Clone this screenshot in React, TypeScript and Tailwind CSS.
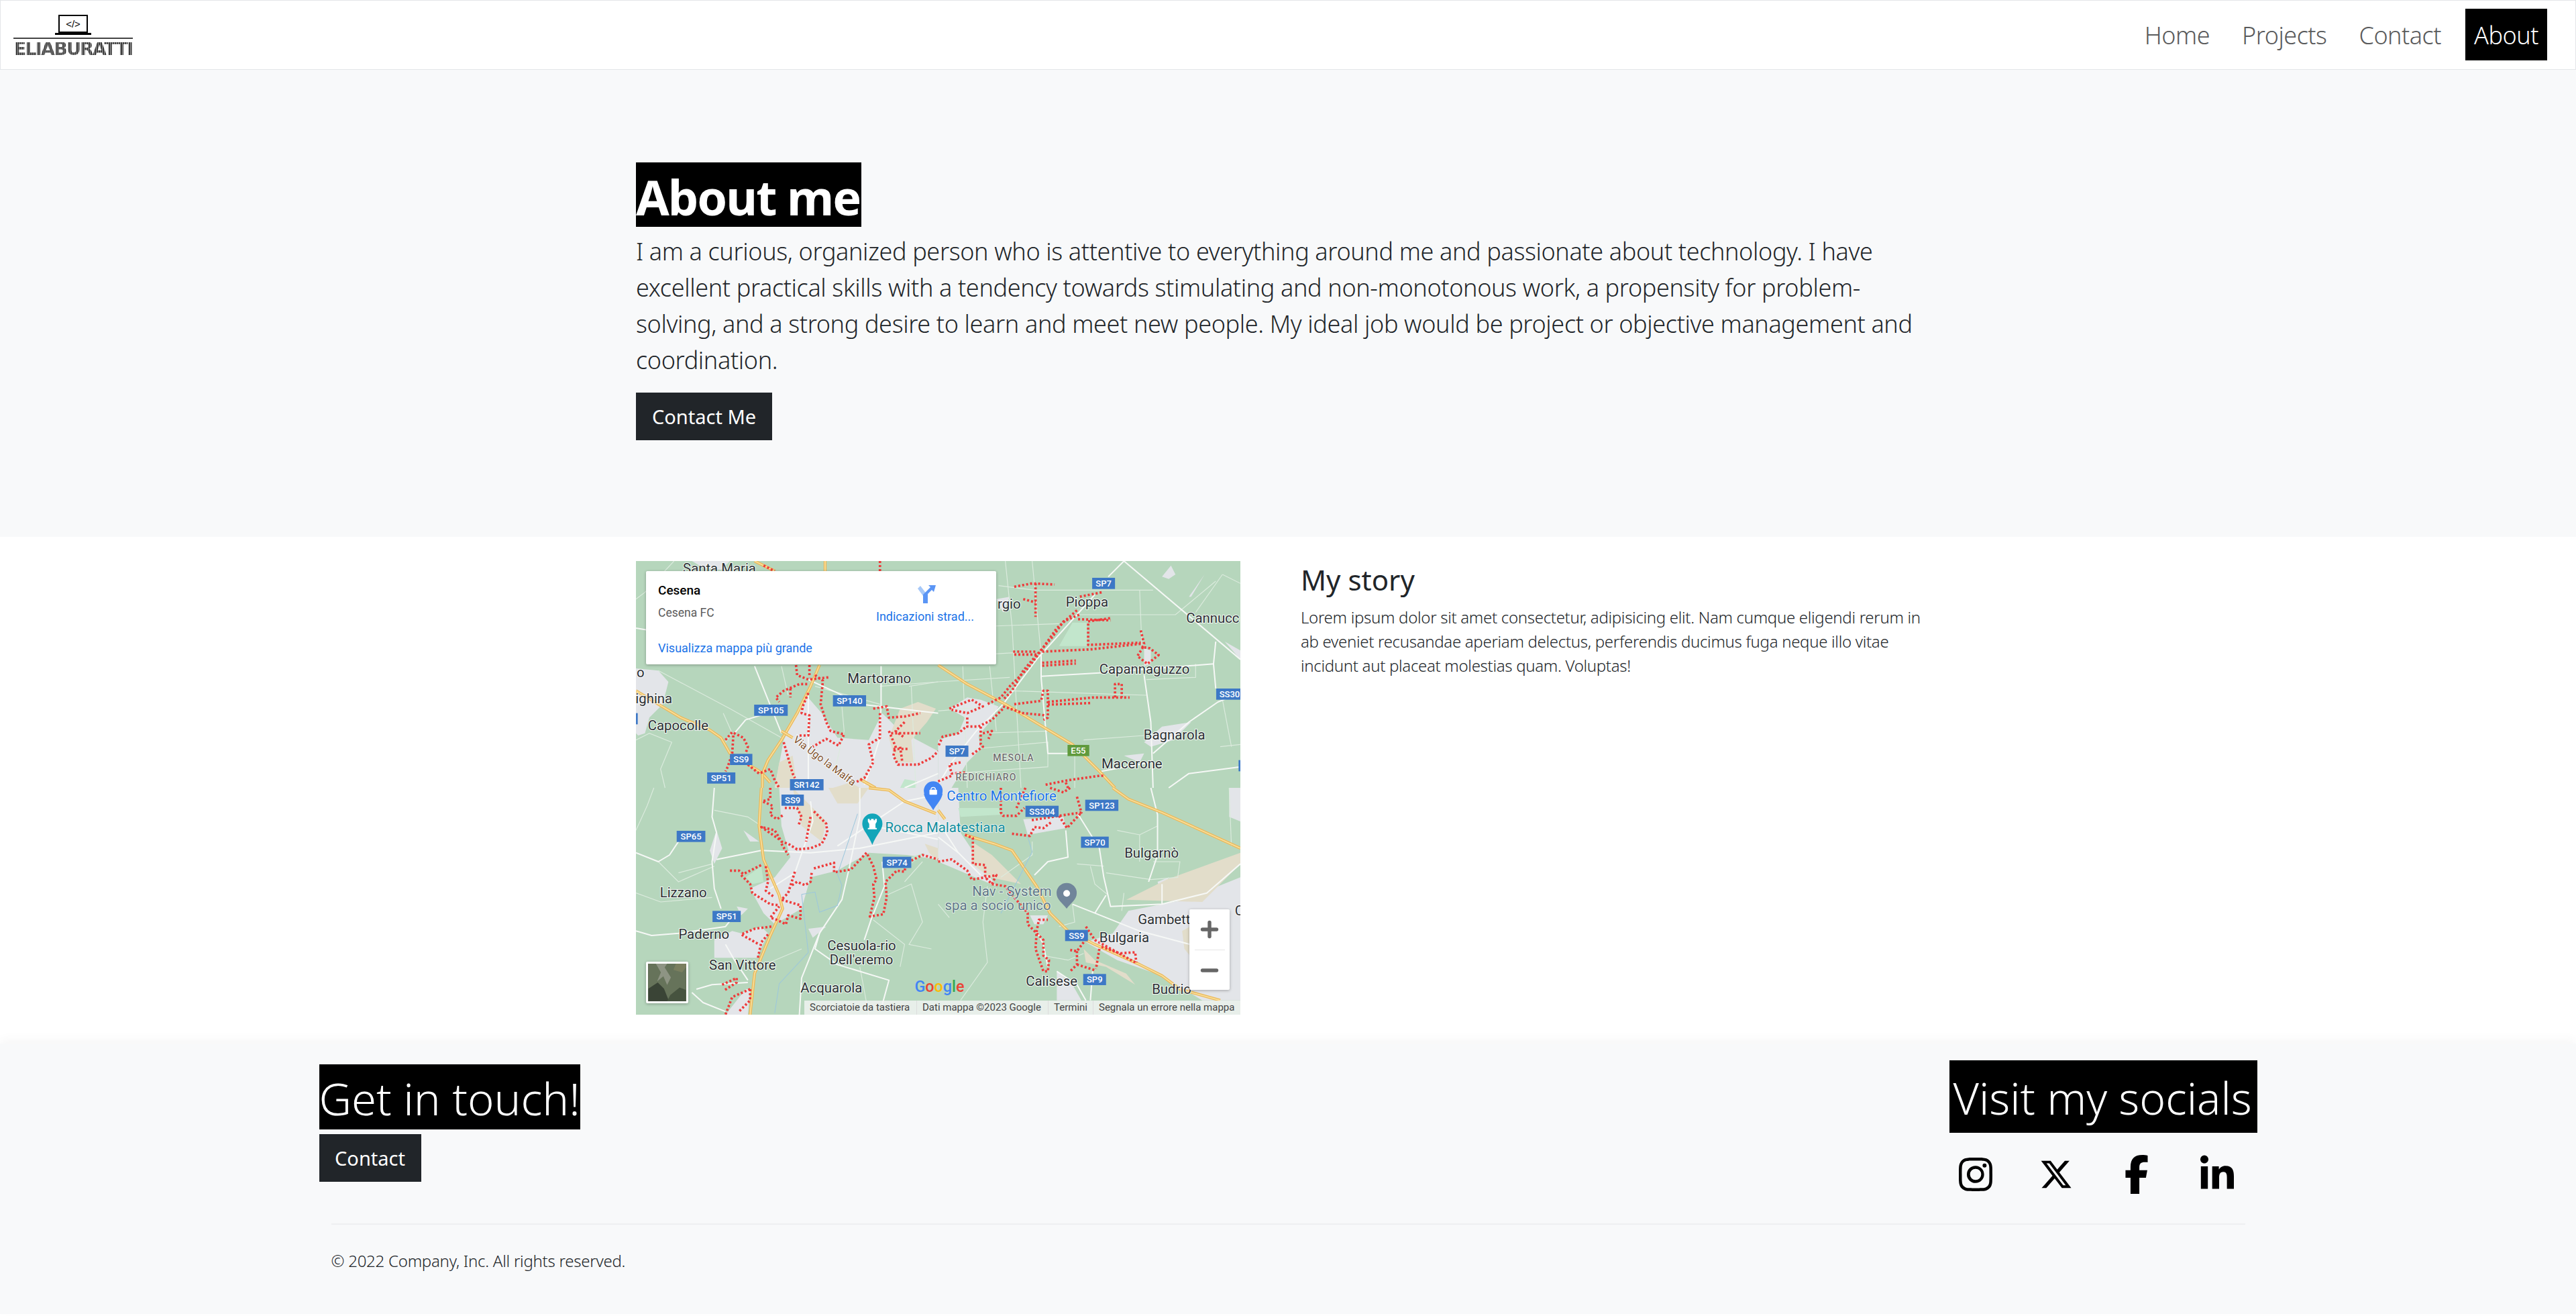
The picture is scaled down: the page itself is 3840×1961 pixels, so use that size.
import { Minus, Plus } from "lucide-react";
import { BsInstagram } from "react-icons/bs";
import { FaFacebookF, FaLinkedinIn, FaXTwitter } from "react-icons/fa6";

// map coords are 3x the real pixels, one group per quadrant of the map
type Layer = {
  dx: number;
  dy: number;
  urban: string[];
  beige: string[];
  park: string[];
  white: string[];
  thin: string[];
  yellow: string[];
  red: string[];
};

const layers: Layer[] = [
  {
    dx: 0,
    dy: 0,
    urban: [
      "0,480 100,490 145,540 120,640 60,700 40,770 10,780 0,770",
      "760,600 830,680 900,790 1040,800 1100,680 1180,760 1350,850 1350,1014 620,1014 660,800 720,680",
      "250,0 420,0 380,40 300,30",
    ],
    beige: [
      "1180,660 1260,630 1340,660 1300,720 1230,800 1240,900 1160,900 1130,790",
      "640,900 700,870 720,1014 620,1014",
      "880,1014 960,990 1000,1014",
    ],
    park: ["1180,1014 1200,975 1255,985 1250,1014"],
    white: [
      "530,470 590,620 650,770",
      "440,770 490,710 590,680",
      "770,530 900,590 1000,640 1350,680",
      "1095,470 1095,640",
      "770,600 770,1014",
      "1095,640 1090,790 1050,920 1020,1000",
      "1350,950 1200,1014",
      "0,300 60,310",
    ],
    thin: [
      "0,170 40,140 170,0",
      "390,680 430,770 400,810",
      "100,490 420,660 650,790",
      "0,800 60,770 160,810 110,930 130,1014",
      "650,470 680,600",
      "1220,560 1350,540",
      "920,650 930,760 890,930",
      "1090,560 1350,540",
      "1230,560 1250,1014",
      "800,560 1090,640",
    ],
    yellow: [
      "0,580 200,700 330,755 380,790 420,860 560,945 600,990",
      "820,465 780,560 720,680 650,800 590,890 565,950 565,1014",
      "530,0 620,45",
      "845,0 845,45",
      "650,760 700,790",
      "1000,975 1070,1014",
    ],
    red: [
      "715,465 720,510 770,530 860,520",
      "775,465 775,520",
      "800,510 835,535 825,640 850,720 870,760 930,775 905,825 850,795 790,830",
      "765,550 730,550 660,580 625,610 640,630",
      "690,570 690,610",
      "770,590 745,650 740,680 775,690 770,780 730,780",
      "400,800 430,765 480,790 500,830 490,860",
      "435,780 430,860 410,920 400,940",
      "500,910 550,950 600,930 620,980 640,1014",
      "660,810 700,950 710,970",
      "1060,660 1120,650 1130,700 1200,695 1270,680",
      "1090,680 1090,790 1040,820 1060,900 1020,970 980,990",
      "1130,760 1160,830 1150,870 1170,910 1260,910 1320,880 1350,850",
      "1140,770 1270,770",
      "1200,720 1160,760 1200,790",
      "1150,840 1220,840",
      "1180,830 1190,900",
      "570,20 620,45",
      "1090,0 1090,45",
    ],
  },
  {
    dx: 1350,
    dy: 0,
    urban: [
      "50,660 130,610 190,620 270,650 230,720 180,780 190,840 130,900 60,1014 0,1014 0,800 90,770 120,700",
      "920,390 950,400 950,460 920,470",
      "1000,70 1040,20 1060,60 1030,80",
      "1120,160 1190,60 1130,160",
      "920,810 1000,740 1130,720 1050,800 950,830",
      "830,870 920,860 900,900",
      "1280,360 1350,400 1350,440",
      "260,170 320,160 290,230",
    ],
    beige: [],
    park: ["540,380 600,275 665,275 665,380"],
    white: [
      "0,1000 60,900 170,760 290,640 440,440 620,240 700,150",
      "460,420 460,520 490,860 620,860",
      "460,515 720,500 1230,460",
      "830,0 1350,440",
      "920,510 950,720 960,1014",
      "960,860 1120,720 1250,630 1350,590",
      "1240,360 1230,460 1240,570",
      "1030,1014 1120,950 1350,920",
      "730,940 950,900",
      "830,0 760,70",
    ],
    thin: [
      "300,0 330,290 370,1014",
      "420,0 460,420",
      "0,300 540,280",
      "270,110 430,130 960,130",
      "0,430 340,410",
      "620,240 1060,240 1240,90",
      "900,130 910,380",
      "0,670 230,650",
      "110,470 130,1014",
      "230,470 260,760",
      "0,540 320,520",
      "320,580 930,600",
      "180,770 490,760",
      "160,840 490,810 490,920 60,950",
      "650,800 920,780",
      "610,870 610,1014",
      "1270,60 1350,100",
      "1270,60 1150,230",
      "930,530 1150,520 1150,460",
      "1260,830 1350,820",
      "1270,620 1310,830",
    ],
    yellow: ["0,465 130,550 300,640 600,820 720,940 790,1014"],
    red: [
      "340,115 420,100 520,105",
      "435,100 435,250",
      "380,170 435,185",
      "730,140 680,150 630,160",
      "620,220 530,300 460,400 400,480 320,560 280,610 220,640",
      "630,240 560,270 510,340 440,420 380,490 330,580 290,620",
      "625,260 770,265",
      "670,270 770,255",
      "670,280 670,375 905,365",
      "335,405 440,405",
      "340,418 440,418",
      "465,405 680,395 905,370",
      "905,310 920,370 910,390",
      "915,385 890,425 935,460 985,420 945,390 915,385",
      "465,455 615,445",
      "465,468 615,458",
      "340,640 460,625 470,580 490,580 490,700 470,710",
      "490,630 690,610 780,610 855,610",
      "790,610 790,550 820,550 820,610",
      "490,642 680,635",
      "290,650 380,680 480,690",
      "50,660 100,640 150,620 200,650 130,680 60,665",
      "130,700 130,740 180,740 240,710 290,660",
      "190,740 190,820 200,830 150,865",
      "200,770 240,760 225,795",
      "120,745 90,770 20,785 0,830",
      "100,900 50,910 60,950 120,945",
      "0,985 60,960",
      "480,1000 580,980 720,960 740,960",
      "570,990 580,1014",
    ],
  },
  {
    dx: 0,
    dy: 1014,
    urban: [
      "640,0 1350,0 1350,320 1210,300 1040,290 900,370 780,400 740,540 620,610 570,560 510,450 620,400 690,310 650,170",
      "470,650 560,620 590,650 540,760 350,760 350,680 430,640",
      "330,280 360,190 385,270 350,340",
      "400,1014 490,900 510,900 500,1014",
      "450,530 500,540 470,570",
      "770,630 850,620 790,670",
      "480,190 550,240 510,240",
    ],
    beige: [
      "860,0 1040,0 990,70 900,70",
      "700,0 850,150 830,240 740,170",
      "1290,250 1350,270 1350,330 1310,290",
    ],
    park: ["490,400 560,350 570,420 520,430", "1230,310 1290,290 1230,340"],
    white: [
      "350,0 340,130 360,200 340,330 350,450 380,540",
      "360,320 560,280 780,290 1000,270 1350,200",
      "780,60 790,150 710,380 600,450",
      "1000,0 1000,130 950,370 920,500 820,650 740,850 730,1014",
      "1100,330 1110,440 1050,590 1020,680",
      "1060,170 1350,230",
      "0,290 100,330 150,300 190,240",
      "0,640 70,660 190,650 400,620 440,570",
      "400,700 440,770 500,860",
      "270,900 340,880 500,870",
      "250,915 300,960 400,1000",
      "820,650 800,720 900,790 1130,860 1100,970",
      "900,260 1200,60 1350,30",
    ],
    thin: [
      "0,190 50,80 80,0",
      "100,330 190,420 350,350",
      "350,100 500,130 560,170",
      "190,380 340,340",
      "1120,480 1230,430 1280,600 1220,700 1320,720",
      "1060,590 1200,700 1180,800",
      "0,470 110,510 340,490",
      "550,800 740,720",
      "1000,800 1040,1014",
      "1280,330 1200,420",
    ],
    yellow: [
      "560,0 550,170 570,320 640,480 655,540 600,660 530,830 510,1014",
      "1040,0 1130,10 1200,60 1340,115",
    ],
    red: [
      "600,0 600,50 565,60 610,80 600,120 630,140 660,120",
      "665,90 720,90 740,130 725,170",
      "780,130 760,240",
      "795,105 850,160 855,200 830,250 780,270 720,275 680,250 650,240 620,190 560,175 640,230",
      "650,250 680,300",
      "420,370 460,370 480,385 560,345",
      "470,390 510,430 520,470 600,520 640,525",
      "580,350 590,420 580,460 620,490",
      "710,375 680,470 650,500 735,525 735,585 680,570 670,610 630,590 600,580 640,530",
      "795,360 885,335 885,378 960,365 1030,290 1060,350 1075,410 1060,430 1065,490 1045,575 1105,565 1120,490 1115,420 1165,370 1200,375 1210,310",
      "1230,325 1280,300 1350,320",
      "785,380 780,420 755,435 720,420 690,440",
      "605,620 530,630 470,655 550,700",
      "590,655 560,690 545,760",
      "385,880 450,850 450,870 395,905",
      "510,900 430,935 400,1014",
      "510,900 510,950 460,1000",
    ],
  },
  {
    dx: 1350,
    dy: 1014,
    urban: [
      "0,0 90,0 100,200 200,350 260,440 0,330",
      "380,140 560,130 570,180 400,210",
      "660,690 780,650 850,550 1100,500 1350,400 1350,950 1180,950 1000,840 800,770",
      "410,570 490,570 470,610 430,610",
      "530,820 600,880 640,950 530,950",
      "980,420 1030,400 1000,480",
      "1300,0 1350,0 1350,150 1300,130",
    ],
    beige: [
      "150,240 240,300 370,430 230,400 150,340",
      "840,500 1020,410 1350,290 1350,340 1180,510",
      "650,720 700,770 840,830 880,880 750,800 660,780",
      "1090,640 1125,620 1125,750 1100,720",
    ],
    park: ["90,90 270,90 280,120 100,130"],
    white: [
      "0,220 90,290 190,390",
      "0,150 90,290",
      "570,190 580,310 490,330 430,390",
      "620,110 720,270 740,400 770,530 1000,520 1200,470 1350,340",
      "600,520 700,560 900,640 1125,700",
      "950,0 980,120 980,300 940,420",
      "1000,430 1000,520",
      "700,560 750,480",
      "440,640 470,700 490,800",
      "530,820 620,880 660,950",
      "690,820 680,950",
    ],
    thin: [
      "420,240 420,300 280,400",
      "620,340 740,350",
      "680,350 700,430 760,480",
      "750,380 950,410 1070,400 1080,330 960,330",
      "800,190 900,210 980,170",
      "900,210 900,330",
      "220,440 200,600 220,780 100,950",
      "600,520 610,600 540,620",
      "1300,0 1310,260",
      "830,470 820,550",
      "470,750 580,770 650,740",
      "0,520 50,580",
    ],
    yellow: [
      "120,210 250,250 330,280 440,440 500,560 580,640 700,700 900,790 1000,840 1080,900 1260,950",
      "780,0 850,50 1000,110 1350,270",
      "0,100 30,140",
    ],
    red: [
      "280,0 280,110 290,125 350,125 385,90",
      "0,330 60,320 130,370 150,410 210,400",
      "120,210 155,225 155,340 210,345 210,400 240,430 260,390 210,400",
      "240,430 300,440 340,490 400,560 400,610 470,680 470,750 495,770 490,820 470,820 435,720 440,640 450,590 490,590",
      "620,40 640,110 540,125 415,145",
      "540,125 575,180 640,110",
      "330,205 410,215 430,175 470,180 510,150",
      "660,620 700,680 880,780",
      "720,720 705,810",
      "650,690 620,730 590,725",
      "620,730 620,790 590,820",
      "620,790 700,815",
      "730,710 810,740 880,735 885,780",
      "390,0 350,90",
      "500,0 560,20 590,0",
    ],
  },
];

const shields = [
  [528, 642, 150, "SP105"],
  [880, 600, 148, "SP140"],
  [420, 862, 100, "SS9"],
  [318, 945, 126, "SP51"],
  [688, 975, 150, "SR142"],
  [1350 + 688, 75, 102, "SP7"],
  [1350 + 33, 825, 102, "SP7"],
  [1350 + 1242, 570, 120, "SS30"],
  [182, 1014 + 192, 128, "SP65"],
  [650, 1014 + 30, 100, "SS9"],
  [342, 1014 + 550, 126, "SP51"],
  [1102, 1014 + 308, 128, "SP74"],
  [1350 + 657, 1014 + 53, 148, "SP123"],
  [1350 + 390, 1014 + 80, 148, "SS304"],
  [1350 + 638, 1014 + 218, 124, "SP70"],
  [1350 + 567, 1014 + 635, 102, "SS9"],
  [1350 + 648, 1014 + 832, 102, "SP9"],
] as const;

const labels = [
  [210, 55, "Santa Maria"],
  [3, 518, "o"],
  [-2, 635, "ighina"],
  [53, 755, "Capocolle"],
  [945, 545, "Martorano"],
  [1350 + 265, 212, "rgio"],
  [1350 + 570, 205, "Pioppa"],
  [1350 + 1108, 275, "Cannucc"],
  [1350 + 720, 503, "Capannaguzzo"],
  [1350 + 918, 798, "Bagnarola"],
  [1350 + 730, 928, "Macerone"],
  [107, 1014 + 490, "Lizzano"],
  [190, 1014 + 675, "Paderno"],
  [327, 1014 + 812, "San Vittore"],
  [855, 1014 + 725, "Cesuola-rio"],
  [865, 1014 + 790, "Dell'eremo"],
  [735, 1014 + 915, "Acquarola"],
  [1350 + 832, 1014 + 312, "Bulgarnò"],
  [1350 + 892, 1014 + 610, "Gambett"],
  [1350 + 720, 1014 + 690, "Bulgaria"],
  [1350 + 955, 1014 + 920, "Budrio"],
  [1350 + 392, 1014 + 885, "Calisese"],
  [1350 + 1325, 1014 + 570, "C"],
] as const;

const MapDrawing = () => (
  <svg
    viewBox="0 0 2700 2028"
    preserveAspectRatio="none"
    className="block w-full h-full"
    fontFamily="Roboto, sans-serif"
  >
    <rect width="2700" height="2028" fill="#b6d6bc" />
    {layers.map((l, i) => (
      <g key={i} transform={`translate(${l.dx},${l.dy})`} fill="none">
        {l.urban.map((p) => (
          <polygon key={p} points={p} fill="#e3e5e9" />
        ))}
        {l.beige.map((p) => (
          <polygon key={p} points={p} fill="#e2ddca" />
        ))}
        {l.park.map((p) => (
          <polygon key={p} points={p} fill="#c2e6cc" />
        ))}
        {l.thin.map((p) => (
          <polyline key={p} points={p} stroke="#dcebde" strokeWidth="3.5" />
        ))}
        {l.white.map((p) => (
          <polyline
            key={p}
            points={p}
            stroke="#f6f8f6"
            strokeWidth="6"
            strokeLinejoin="round"
          />
        ))}
        {l.yellow.map((p) => (
          <g key={p} strokeLinejoin="round">
            <polyline points={p} stroke="#ecb95a" strokeWidth="13" />
            <polyline points={p} stroke="#f8df9c" strokeWidth="5" />
          </g>
        ))}
        {l.red.map((p) => (
          <polyline
            key={p}
            points={p}
            stroke="#ee3b3b"
            strokeWidth="11"
            strokeDasharray="9 9"
            strokeLinejoin="round"
          />
        ))}
      </g>
    ))}
    {/* blue bits on the map's edges and the river */}
    <rect x="0" y="680" width="8" height="50" fill="#3d78c6" />
    <rect x="2692" y="890" width="8" height="50" fill="#3d78c6" />
    <polyline
      points="740,1490 800,1480 820,1570 900,1540 920,1450 900,1400 990,1130"
      fill="none"
      stroke="#9cc7dc"
      strokeWidth="3"
    />
    <polyline
      points="740,1490 770,1750 640,1890 620,2020"
      fill="none"
      stroke="#9cc7dc"
      strokeWidth="3"
    />
    <polyline
      points="1630,1575 1770,1300 1750,1230"
      fill="none"
      stroke="#9cc7dc"
      strokeWidth="3"
    />

    <g
      fill="#2b2f33"
      stroke="#ffffff"
      strokeWidth="6"
      strokeOpacity="0.85"
      paintOrder="stroke"
      fontSize="61"
    >
      {labels.map(([x, y, t]) => (
        <text key={t + x} x={x} y={y}>
          {t}
        </text>
      ))}
    </g>
    <g
      fill="#6f6f6f"
      stroke="#ffffff"
      strokeWidth="5"
      strokeOpacity="0.8"
      paintOrder="stroke"
      fontSize="42"
      fontWeight="500"
      letterSpacing="3"
    >
      <text x={1350 + 245} y={895}>
        MESOLA
      </text>
      <text x={1350 + 78} y={982}>
        REDICHIARO
      </text>
    </g>
    <text
      x="700"
      y="805"
      transform="rotate(37 700 805)"
      fontSize="46"
      fill="#7d4f2a"
      stroke="#ffffff"
      strokeWidth="5"
      paintOrder="stroke"
    >
      Via Ugo la Malfa
    </text>

    {shields.map(([x, y, w, t]) => (
      <g key={t + x}>
        <rect x={x} y={y} width={w} height="50" fill="#3d78c6" />
        <text
          x={x + w / 2}
          y={y + 39}
          textAnchor="middle"
          fontSize="39"
          fontWeight="500"
          fill="#ffffff"
        >
          {t}
        </text>
      </g>
    ))}
    <rect x={1350 + 578} y="822" width="97" height="50" fill="#5f9a3c" />
    <text
      x={1350 + 626}
      y="861"
      textAnchor="middle"
      fontSize="39"
      fontWeight="500"
      fill="#ffffff"
    >
      E55
    </text>

    {/* pins */}
    <path
      d="M1286 1040c6 30 30 50 42 74c12-24 36-44 42-74z"
      fill="#4285f4"
    />
    <circle cx="1328" cy="1027" r="42" fill="#4285f4" />
    <rect x="1311" y="1022" width="34" height="23" rx="3" fill="#ffffff" />
    <path
      d="M1318 1022a10 10 0 0 1 20 0"
      fill="none"
      stroke="#ffffff"
      strokeWidth="4"
    />
    <path
      d="M1011 1160a45 45 0 0 1 90 0c0 30-25 45-45 95c-20-50-45-65-45-95z"
      transform="translate(0,14)"
      fill="#12a5b9"
    />
    <path
      d="M1036 1196h40v-6h-6v-18l6-10v-12h-8v6h-6v-6h-12v6h-6v-6h-8v12l6 10v18h-6z"
      transform="translate(0,3)"
      fill="#ffffff"
    />
    <text x="1113" y={1014 + 198} fontSize="61" fill="#0f8d9e" stroke="#fff" strokeWidth="5" strokeOpacity="0.8" paintOrder="stroke">
      Rocca Malatestiana
    </text>
    <text x={1350 + 38} y={1014 + 58} fontSize="61" fill="#1a73e8" stroke="#fff" strokeWidth="5" strokeOpacity="0.8" paintOrder="stroke">
      Centro Montefiore
    </text>
    <path
      d="M1879 1484a45 45 0 0 1 90 0c0 30-25 42-45 70c-20-28-45-40-45-70z"
      fill="#70859a"
    />
    <circle cx="1924" cy="1486" r="15" fill="#ffffff" />
    <g fill="#5d7687" stroke="#fff" strokeWidth="5" strokeOpacity="0.7" paintOrder="stroke" fontSize="61">
      <text x={1350 + 152} y={1014 + 482}>
        Nav - System
      </text>
      <text x={1350 + 30} y={1014 + 545}>
        spa a socio unico
      </text>
    </g>

    <text x="1245" y={1014 + 912} fontSize="70" fontWeight="500">
      <tspan fill="#4285f4">G</tspan>
      <tspan fill="#ea4335">o</tspan>
      <tspan fill="#fbbc05">o</tspan>
      <tspan fill="#4285f4">g</tspan>
      <tspan fill="#34a853">l</tspan>
      <tspan fill="#ea4335">e</tspan>
    </text>
  </svg>
);

const MapPanel = () => (
  <div className="relative shrink-0 w-[901px] h-[676px] overflow-hidden font-['Roboto',sans-serif]">
    <MapDrawing />
    <div className="absolute left-[15px] top-[15px] w-[522px] h-[139px] bg-white rounded-[2px] shadow-[0_1px_4px_rgba(0,0,0,0.3)]">
      <div className="absolute left-[18px] top-[17px] text-[19px] leading-[24px] font-medium text-black">
        Cesena
      </div>
      <div className="absolute left-[18px] top-[50px] text-[17.5px] leading-[24px] text-[#5b5b5b]">
        Cesena FC
      </div>
      <div className="absolute left-[18px] top-[103px] text-[18px] leading-[24px] text-[#1a73e8]">
        Visualizza mappa più grande
      </div>
      <svg
        viewBox="0 0 27 27"
        className="absolute left-[405px] top-[21px] w-[27px] h-[27px]"
      >
        <path d="M8 27V16L0 5l4-4 10 13z" fill="#a6c8f8" />
        <path d="M8 27h7V13l6-6 3 3 3-10H16l3 3-11 11z" fill="#5a95f5" />
      </svg>
      <div className="absolute left-[343px] top-[56px] text-[18px] leading-[24px] text-[#1a73e8] whitespace-nowrap">
        Indicazioni strad...
      </div>
    </div>
    <div className="absolute left-[15px] top-[597px] w-[63px] h-[62px] border-[3px] border-white rounded-[2px] bg-[#5d6b52] overflow-hidden shadow-[0_1px_4px_rgba(0,0,0,0.3)]">
      <svg viewBox="0 0 60 60" className="w-full h-full">
        <rect width="60" height="60" fill="#66735a" />
        <path d="M0 40 15 30l10 10 8 20H0z" fill="#3a4436" />
        <path d="M35 50l15-12 10 4v18H30z" fill="#46533f" />
        <path d="M12 0 20 14 14 28 24 20 30 34 36 22 26 6 30 0z" fill="#8e9484" />
        <path d="M40 10l14 4 6-8V0H44z" fill="#7a7f5f" />
      </svg>
    </div>
    <div className="absolute left-[825px] top-[519px] w-[60px] h-[120px] bg-white rounded-[2px] shadow-[0_1px_4px_rgba(0,0,0,0.3)] flex flex-col items-center text-[#666666]">
      <div className="h-[60px] flex items-center justify-center">
        <Plus size={36} strokeWidth={3.6} />
      </div>
      <div className="w-[45px] h-px bg-[#e6e6e6]" />
      <div className="flex-1 flex items-center justify-center">
        <Minus size={36} strokeWidth={3.6} />
      </div>
    </div>
    <div className="absolute right-0 bottom-0 left-[251px] h-[21px] bg-[rgba(245,245,245,0.8)] flex items-center text-[15px] leading-[21px] text-[#444444] whitespace-nowrap">
      <span className="pl-[8px] w-[167px]">Scorciatoie da tastiera</span>
      <span className="pl-[8px] w-[196px] border-l border-[#dddddd]">
        Dati mappa ©2023 Google
      </span>
      <span className="pl-[8px] w-[67px] border-l border-[#dddddd]">Termini</span>
      <span className="pl-[8px] border-l border-[#dddddd]">
        Segnala un errore nella mappa
      </span>
    </div>
  </div>
);

const Logo = () => (
  <div className="flex flex-col items-center w-[178px] ml-[19px] pt-[21px]">
    <div className="w-[44px] h-[27px] border-[2px] border-black flex items-center justify-center text-[15px] leading-none text-black font-['Liberation_Sans',sans-serif]">
      &lt;/&gt;
    </div>
    <div className="w-[54px] h-[3px] bg-black" />
    <div className="w-full h-[2px] bg-[#444444] mt-[4px]" />
    <div className="mt-[5px] w-fit h-[20px] text-[27px] leading-[20px] tracking-[-1.8px] uppercase font-bold font-['DejaVu_Sans',sans-serif] whitespace-nowrap text-transparent bg-clip-text bg-[repeating-linear-gradient(90deg,#3a3a3a_0px,#3a3a3a_2px,#a0a0a0_2px,#a0a0a0_3px)]">
      EliaBuratti
    </div>
  </div>
);

const nav = ["Home", "Projects", "Contact"];

const socials = [
  <BsInstagram size={50} />,
  <FaXTwitter size={54} />,
  <FaFacebookF size={58} />,
  <FaLinkedinIn size={58} />,
];

export default function App() {
  return (
    <div className="w-[3840px] h-[1961px] overflow-hidden bg-white text-[#212529] font-['Noto_Sans','Open_Sans',sans-serif]">
      <header className="h-[104px] border border-[#e3e6e9] bg-white flex items-start justify-between">
        <Logo />
        <nav className="flex gap-[24px] pt-[12px] pr-[42px] text-[36px] font-light tracking-[-0.5px]">
          {nav.map((n) => (
            <a key={n} className="h-[77px] px-[12px] leading-[80px] text-[#595a5b]">
              {n}
            </a>
          ))}
          <a className="h-[77px] w-[122px] text-center leading-[80px] bg-black text-white">
            About
          </a>
        </nav>
      </header>

      <section className="h-[696px] bg-[#f8f9fa] pt-[138px]">
        <div className="mx-auto w-[1944px]">
          <h1 className="w-[336px] h-[96px] bg-black text-white text-[72px] leading-[102px] font-bold tracking-[-2px] whitespace-nowrap">
            About me
          </h1>
          <p className="mt-[10px] text-[36px] leading-[54px] font-[350] tracking-[-0.36px] whitespace-nowrap">
            I am a curious, organized person who is attentive to everything
            around me and passionate about technology. I have
            <br />
            excellent practical skills with a tendency towards stimulating and
            non-monotonous work, a propensity for problem-
            <br />
            solving, and a strong desire to learn and meet new people. My ideal
            job would be project or objective management and
            <br />
            coordination.
          </p>
          <button className="mt-[21px] w-[203px] h-[71px] bg-[#212529] text-white text-[29px]">
            Contact Me
          </button>
        </div>
      </section>

      <section className="h-[755px] bg-white pt-[36px]">
        <div className="mx-auto w-[1944px] flex gap-[90px]">
          <MapPanel />
          <div className="w-[960px]">
            <h2 className="text-[42px] leading-[56px] font-normal">My story</h2>
            <p className="mt-[10px] text-[24px] leading-[36px] font-light tracking-[-0.3px] whitespace-nowrap">
              Lorem ipsum dolor sit amet consectetur, adipisicing elit. Nam
              cumque eligendi rerum in
              <br />
              ab eveniet recusandae aperiam delectus, perferendis ducimus fuga
              neque illo vitae
              <br />
              incidunt aut placeat molestias quam. Voluptas!
            </p>
          </div>
        </div>
      </section>

      <footer className="h-[403px] bg-[#f8f9fa] shadow-[0_-6px_14px_rgba(0,0,0,0.035)]">
        <div className="mx-auto w-[2889px] flex justify-between items-start h-[268px]">
          <div className="pt-[31px]">
            <h2 className="w-[389px] h-[97px] bg-black text-white text-[67px] leading-[101px] font-light whitespace-nowrap">
              Get in touch!
            </h2>
            <button className="mt-[7px] w-[152px] h-[71px] bg-[#212529] text-white text-[29px]">
              Contact
            </button>
          </div>
          <div className="pt-[25px] w-[459px]">
            <h2 className="h-[108px] px-[6px] bg-black text-white text-[66px] leading-[110px] font-light whitespace-nowrap">
              Visit my socials
            </h2>
            <div className="mt-[33px] pl-[14px] flex gap-[70px] items-center text-black h-[58px]">
              {socials.map((s, i) => (
                <span key={i} className="w-[50px] flex justify-center">
                  {s}
                </span>
              ))}
            </div>
          </div>
        </div>
        <div className="mx-auto w-[2853px] border-t-[2px] border-[#eeeff1] pt-[36px] text-[24px] leading-[36px] font-light tracking-[-0.25px]">
          © 2022 Company, Inc. All rights reserved.
        </div>
      </footer>
    </div>
  );
}
